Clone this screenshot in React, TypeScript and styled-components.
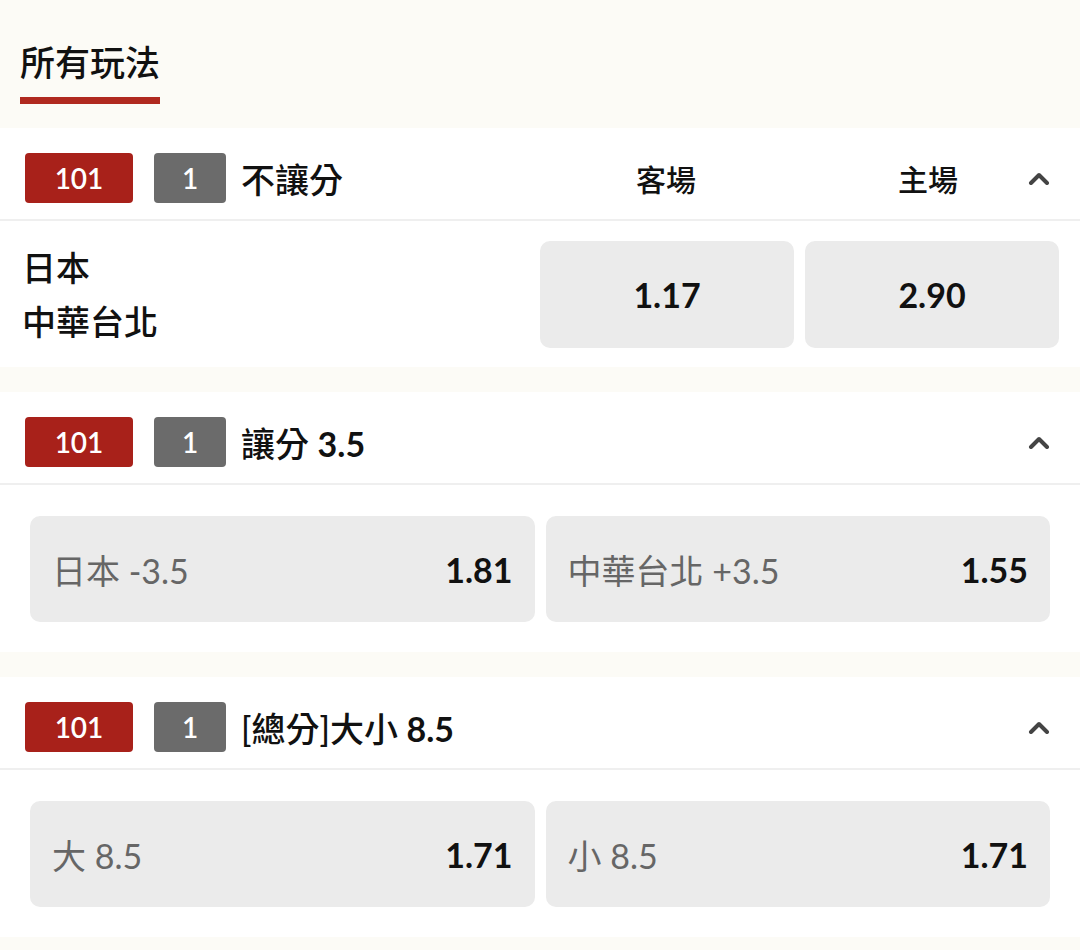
import React from "react";
import styled, { createGlobalStyle } from "styled-components";

const Global = createGlobalStyle`
  html, body { margin: 0; padding: 0; background: #fcfbf6; }
  body { font-family: "Lato", "Noto Sans CJK TC", sans-serif; color: #111; }
  * { box-sizing: border-box; }
`;

const Page = styled.div`
  width: 1080px;
  min-height: 950px;
  background: #fcfbf6;
  display: flex;
  flex-direction: column;
`;

const TabBar = styled.div`
  padding: 40px 0 24px 20px;
  display: flex;
`;

const Tab = styled.div`
  display: flex;
  flex-direction: column;
  gap: 13px;
`;

const TabLabel = styled.span`
  font-size: 35px;
  line-height: 44px;
  font-weight: 500;
  color: #111;
`;

const TabLine = styled.div`
  height: 7px;
  background: #b0291f;
`;

const Cards = styled.div`
  display: flex;
  flex-direction: column;
  gap: 25px;
`;

const Card = styled.section`
  background: #fff;
`;

const Header = styled.div`
  border-bottom: 2px solid #efefef;
  display: flex;
  align-items: center;
  padding: 25px 30px 16px 25px;
`;

const TitleGroup = styled.div`
  flex: 1;
  display: flex;
  align-items: center;
`;

const Badge = styled.span<{ $tone: "red" | "gray"; $w: number }>`
  width: ${(p) => p.$w}px;
  height: 50px;
  border-radius: 4px;
  background: ${(p) => (p.$tone === "red" ? "#a8211a" : "#6b6b6b")};
  color: #fff;
  font-family: "Lato", sans-serif;
  font-size: 28px;
  font-weight: 600;
  display: flex;
  align-items: center;
  justify-content: center;
  margin-right: ${(p) => (p.$tone === "red" ? 21 : 15)}px;
`;

const Title = styled.span`
  font-size: 34px;
  font-weight: 500;
  color: #111;
  white-space: nowrap;
`;

const Num = styled.span`
  font-family: "Lato", sans-serif;
  font-weight: 700;
`;

const Columns = styled.div`
  display: flex;
  gap: 35px;
`;

const ColLabel = styled.span<{ $w: number }>`
  width: ${(p) => p.$w}px;
  text-align: center;
  font-size: 30px;
  font-weight: 500;
  color: #111;
`;

const Chevron = styled.svg`
  width: 22px;
  height: 14px;
  flex: none;
`;

const Body1 = styled.div`
  display: flex;
  align-items: center;
  padding: 20px 21px 19px 22px;
  gap: 11px;
`;

const Teams = styled.div`
  flex: 1;
  display: flex;
  flex-direction: column;
  gap: 8px;
  font-size: 34px;
  font-weight: 500;
  line-height: 46px;
  color: #111;
`;

const OddBox = styled.div`
  width: 254px;
  height: 107px;
  border-radius: 10px;
  background: #ebebeb;
  display: flex;
  align-items: center;
  justify-content: center;
  font-family: "Lato", sans-serif;
  font-size: 34px;
  font-weight: 700;
  color: #111;
`;

const Body2 = styled.div`
  display: grid;
  grid-template-columns: 1fr 1fr;
  gap: 11px;
  padding: 31px 30px 30px 30px;
`;

const OptionBox = styled.div`
  height: 106px;
  border-radius: 10px;
  background: #ebebeb;
  display: flex;
  align-items: center;
  justify-content: space-between;
  padding: 0 22px;
`;

const OptionLabel = styled.span`
  font-size: 34px;
  font-weight: 400;
  color: #666;
`;

const OptionOdd = styled.span`
  font-family: "Lato", sans-serif;
  font-size: 34px;
  font-weight: 700;
  color: #111;
`;

const Up = () => (
  <Chevron viewBox="0 0 22 14">
    <path d="M3 12 L11 4 L19 12" fill="none" stroke="#444" strokeWidth="4" strokeLinecap="round" strokeLinejoin="round" />
  </Chevron>
);

const Head: React.FC<{ title: React.ReactNode; children?: React.ReactNode }> = ({ title, children }) => (
  <Header>
    <TitleGroup>
      <Badge $tone="red" $w={108}>101</Badge>
      <Badge $tone="gray" $w={72}>1</Badge>
      <Title>{title}</Title>
    </TitleGroup>
    {children}
    <Up />
  </Header>
);

const options = [
  {
    key: "handicap",
    title: (
      <>
        讓分 <Num>3.5</Num>
      </>
    ),
    items: [["日本 -3.5", "1.81"], ["中華台北 +3.5", "1.55"]],
  },
  {
    key: "total",
    title: (
      <>
        [總分]大小 <Num>8.5</Num>
      </>
    ),
    items: [["大 8.5", "1.71"], ["小 8.5", "1.71"]],
  },
];

export default function App() {
  return (
    <Page>
      <Global />
      <TabBar>
        <Tab>
          <TabLabel>所有玩法</TabLabel>
          <TabLine />
        </Tab>
      </TabBar>
      <Cards>
        <Card>
          <Head title="不讓分">
            <Columns>
              <ColLabel $w={254}>客場</ColLabel>
              <ColLabel $w={200}>主場</ColLabel>
            </Columns>
          </Head>
          <Body1>
            <Teams>
              <span>日本</span>
              <span>中華台北</span>
            </Teams>
            <OddBox>1.17</OddBox>
            <OddBox>2.90</OddBox>
          </Body1>
        </Card>
        {options.map((o) => (
          <Card key={o.key}>
            <Head title={o.title} />
            <Body2>
              {o.items.map(([label, odd]) => (
                <OptionBox key={label}>
                  <OptionLabel>{label}</OptionLabel>
                  <OptionOdd>{odd}</OptionOdd>
                </OptionBox>
              ))}
            </Body2>
          </Card>
        ))}
      </Cards>
    </Page>
  );
}
